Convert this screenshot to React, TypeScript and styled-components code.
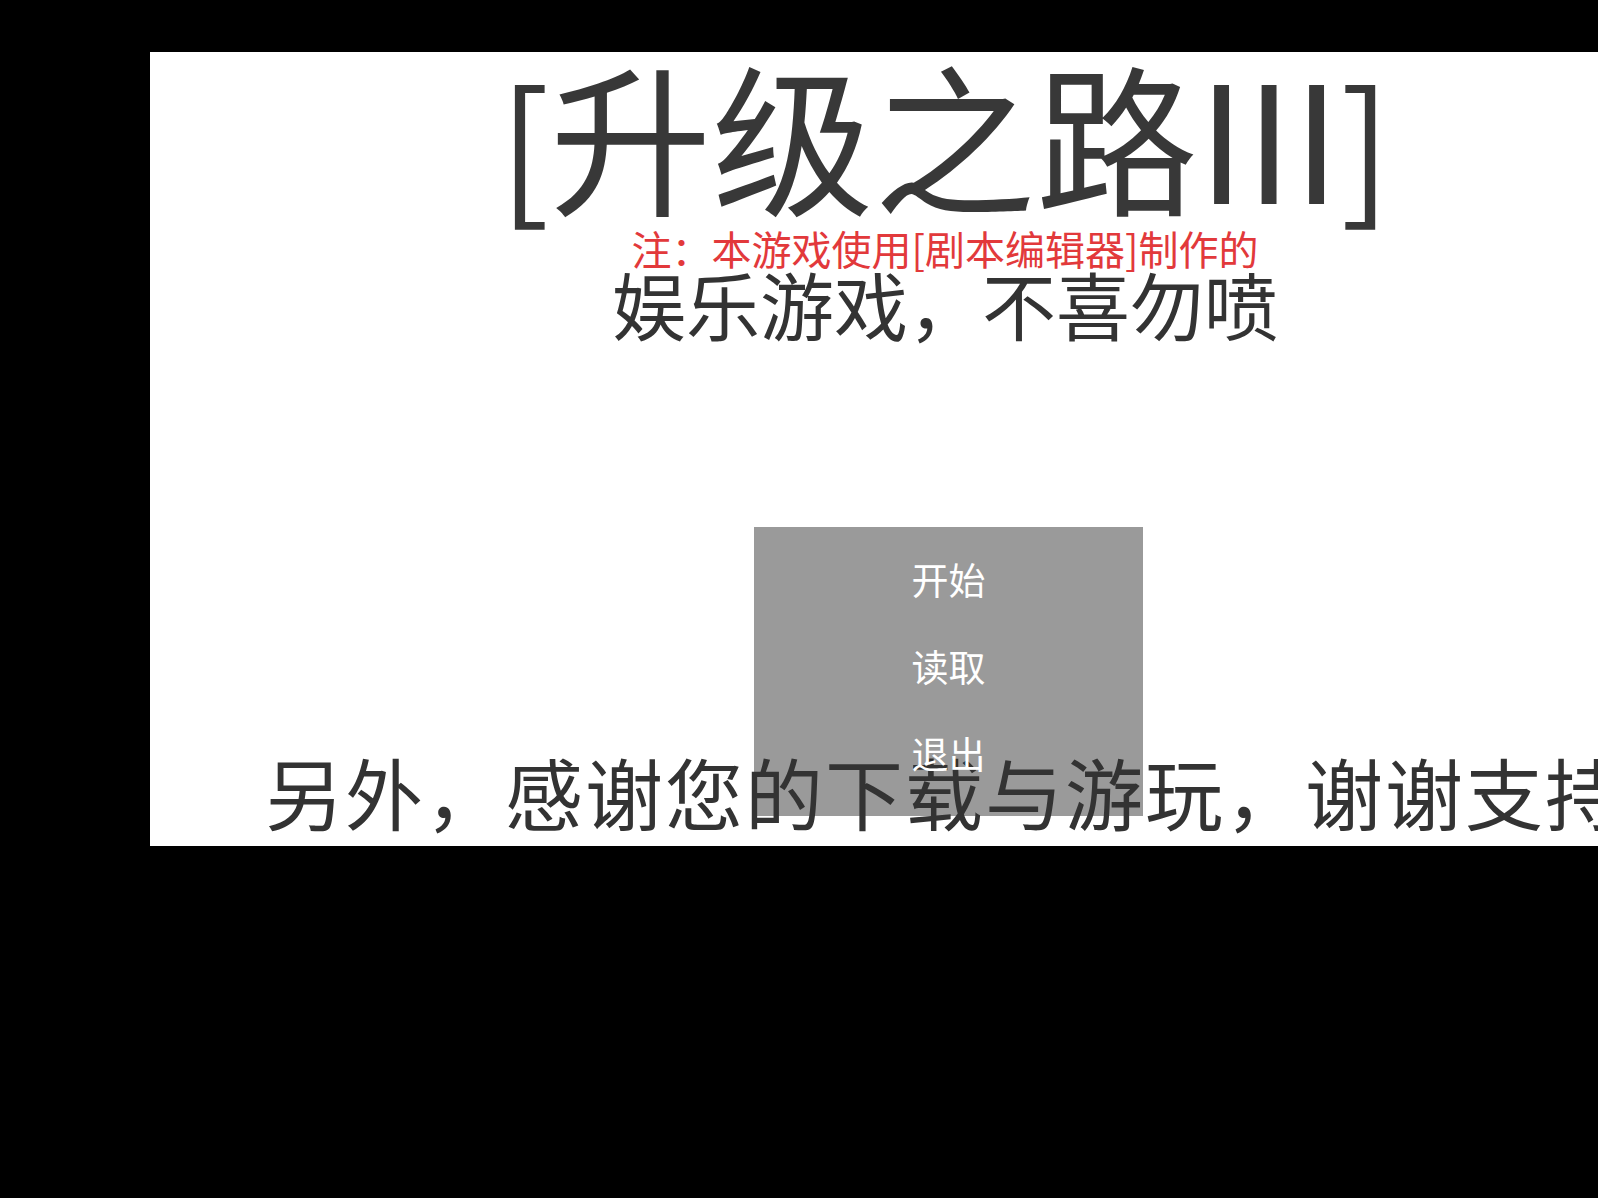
import React from 'react'
import styled, { createGlobalStyle } from 'styled-components'

const GlobalStyle = createGlobalStyle`
  html, body {
    margin: 0;
    padding: 0;
    background: #000;
    overflow: hidden;
  }
  body {
    width: 1598px;
    height: 1198px;
    font-family: "Noto Sans CJK SC", "Noto Sans", sans-serif;
  }
`

const Screen = styled.div`
  width: 1598px;
  height: 1198px;
  background: #000;
  overflow: hidden;
  padding: 52px 0 0 150px;
  box-sizing: border-box;
`

const Stage = styled.div`
  position: relative;
  width: 1590px;
  height: 794px;
  background: #fff;
  display: flex;
  flex-direction: column;
  align-items: center;
  padding-top: 1px;
  box-sizing: border-box;
`

const Title = styled.h1`
  margin: 0;
  font-size: 162px;
  font-weight: 400;
  line-height: 1;
  color: #383838;
  white-space: nowrap;
`

const Bracket = styled.span`
  font-size: 150px;
`

const Note = styled.div`
  margin-top: 13px;
  font-size: 40px;
  line-height: 1;
  color: #e2393b;
  white-space: nowrap;
`

const Subtitle = styled.div`
  margin-top: -2px;
  font-size: 74px;
  line-height: 1;
  color: #333;
  white-space: nowrap;
`

const Menu = styled.div`
  margin-top: 187px;
  margin-left: 7px;
  width: 389px;
  height: 289px;
  background: #9a9a9a;
  display: flex;
  flex-direction: column;
  padding: 9px 0 19px;
  box-sizing: border-box;
`

const MenuItem = styled.div`
  position: relative;
  z-index: 2;
  height: 87px;
  display: flex;
  align-items: center;
  justify-content: center;
  font-size: 37px;
  line-height: 1;
  color: #fff;
  cursor: pointer;
`

const Footer = styled.div`
  position: absolute;
  z-index: 1;
  left: 0;
  right: 0;
  bottom: 16px;
  text-align: center;
  font-size: 78px;
  letter-spacing: 2px;
  line-height: 1;
  color: #333;
  white-space: nowrap;
`

const menuItems = ['开始', '读取', '退出']

export default function App() {
  return (
    <>
      <GlobalStyle />
      <Screen>
        <Stage>
          <Title>
            <Bracket>[</Bracket>升级之路III<Bracket>]</Bracket>
          </Title>
          <Note>注：本游戏使用[剧本编辑器]制作的</Note>
          <Subtitle>娱乐游戏，不喜勿喷</Subtitle>
          <Menu>
            {menuItems.map((item) => (
              <MenuItem key={item}>{item}</MenuItem>
            ))}
          </Menu>
          <Footer>另外，感谢您的下载与游玩，谢谢支持</Footer>
        </Stage>
      </Screen>
    </>
  )
}
